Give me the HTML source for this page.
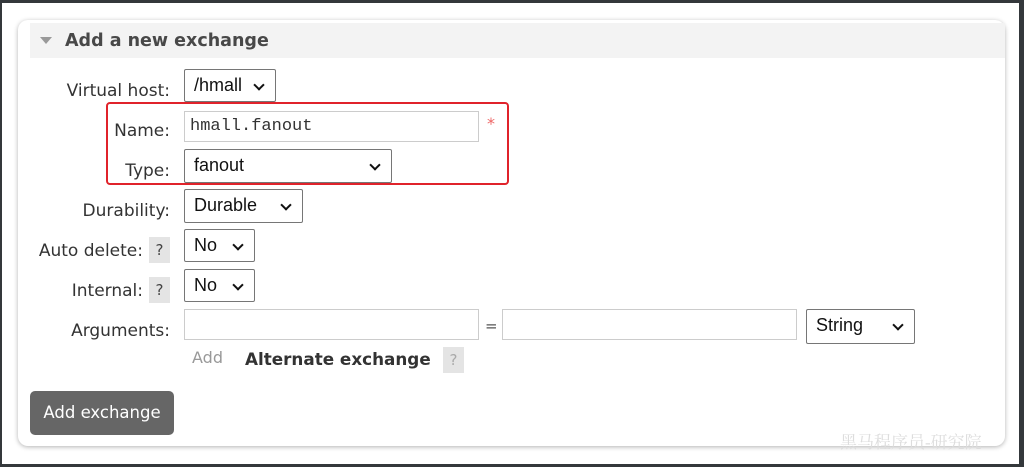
<!DOCTYPE html>
<html><head><style>
body{margin:0;width:1024px;height:467px;background:#34383b;position:relative;overflow:hidden;font-family:"DejaVu Sans",Verdana,sans-serif;color:#333}
.page{position:absolute;left:2px;top:3px;width:1017px;height:461px;background:#fff}
.card{position:absolute;left:18px;top:20px;width:987px;height:426px;background:#fff;border-radius:10px;box-shadow:0 1px 5px rgba(0,0,0,.3)}
.hdr{position:absolute;left:30px;top:23px;width:975px;height:35px;background:#f3f3f3}
.hdr .t{position:absolute;left:35px;top:8px;font-weight:bold;font-size:17.5px;color:#484848}
.tri{position:absolute;left:10px;top:14px;width:0;height:0;border-left:6px solid transparent;border-right:6px solid transparent;border-top:7px solid #999}
.a{position:absolute}
.lbl{position:absolute;font-size:17px;color:#333;text-align:right;right:854px;white-space:nowrap}
.sel{position:absolute;border:1px solid #767676;border-radius:2px;background:#fff;font-family:"Liberation Sans",Arial,sans-serif;font-size:18px;color:#111;box-sizing:border-box;padding:5px 0 0 9px}
.sel:after{content:"";position:absolute;right:12px;top:11px;width:6px;height:6px;border-right:2px solid #111;border-bottom:2px solid #111;transform:rotate(45deg)}
.inp{position:absolute;border:1px solid #ccc;background:#fff;box-sizing:border-box}
.q{position:absolute;width:21px;height:26px;background:#e4e4e4;color:#444;font-size:15px;text-align:center;line-height:26px}
</style></head><body>
<div class="page"></div>
<div class="card"></div>
<div class="hdr"><div class="tri"></div><div class="t">Add a new exchange</div></div>

<div class="lbl" style="top:81px">Virtual host:</div>
<div class="sel" style="left:184px;top:69px;width:92px;height:33px">/hmall</div>

<div class="a" style="left:106px;top:102px;width:403px;height:83px;border:2px solid #e0232b;border-radius:4px;box-sizing:border-box"></div>
<div class="lbl" style="top:121px">Name:</div>
<div class="inp" style="left:184px;top:111px;width:295px;height:31px"></div>
<div class="a" style="left:190px;top:117px;font-family:'Liberation Mono',monospace;font-size:17px;color:#333">hmall.fanout</div>
<div class="a" style="left:487px;top:114px;color:#e66;font-size:16px">*</div>
<div class="lbl" style="top:161px">Type:</div>
<div class="sel" style="left:184px;top:149px;width:208px;height:34px">fanout</div>

<div class="lbl" style="top:201px">Durability:</div>
<div class="sel" style="left:184px;top:189px;width:119px;height:34px">Durable</div>

<div class="lbl" style="top:241px;right:881px">Auto delete:</div>
<div class="q" style="left:149px;top:237px">?</div>
<div class="sel" style="left:184px;top:229px;width:71px;height:33px">No</div>

<div class="lbl" style="top:281px;right:881px">Internal:</div>
<div class="q" style="left:149px;top:277px">?</div>
<div class="sel" style="left:184px;top:269px;width:71px;height:33px">No</div>

<div class="lbl" style="top:321px">Arguments:</div>
<div class="inp" style="left:184px;top:309px;width:295px;height:31px"></div>
<div class="a" style="left:485px;top:317px;font-size:15px;color:#555">=</div>
<div class="inp" style="left:502px;top:309px;width:295px;height:31px"></div>
<div class="sel" style="left:806px;top:309px;width:109px;height:35px">String</div>

<div class="a" style="left:192px;top:348px;font-size:16px;color:#999">Add</div>
<div class="a" style="left:245px;top:349px;font-size:16.8px;font-weight:bold;color:#333">Alternate exchange</div>
<div class="q" style="left:443px;top:347px;color:#aaa">?</div>

<div class="a" style="left:30px;top:391px;width:144px;height:44px;background:#666;border-radius:5px;color:#fff;font-size:16.5px;line-height:44px;text-align:center">Add exchange</div>

<div class="a" style="left:840px;top:428px;font-family:'Liberation Serif','Noto Serif CJK SC',serif;font-size:17px;color:#ddd">黑马程序员-研究院</div>
</body></html>
